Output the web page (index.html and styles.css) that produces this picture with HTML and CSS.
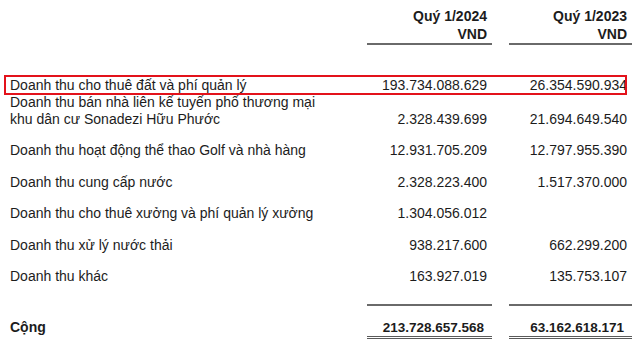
FILE: index.html
```html
<!DOCTYPE html>
<html lang="vi">
<head>
  <meta charset="UTF-8" />
  <meta name="viewport" content="width=device-width, initial-scale=1.0" />
  <title>Doanh thu</title>
  <link rel="stylesheet" href="styles.css">
</head>
<body>

  <div class="report">
    <div class="row head">
      <div></div>
      <div class="num">Quý 1/2024<br>VND</div>
      <div class="num">Quý 1/2023<br>VND</div>
    </div>

    <div class="row item highlight">
      <div class="label">Doanh thu cho thuê đất và phí quản lý</div>
      <div class="num">193.734.088.629</div>
      <div class="num">26.354.590.934</div>
    </div>
    <div class="row item tight">
      <div class="label">Doanh thu bán nhà liên kế tuyến phố thương mại<br>khu dân cư Sonadezi Hữu Phước</div>
      <div class="num">2.328.439.699</div>
      <div class="num">21.694.649.540</div>
    </div>
    <div class="row item">
      <div class="label">Doanh thu hoạt động thể thao Golf và nhà hàng</div>
      <div class="num">12.931.705.209</div>
      <div class="num">12.797.955.390</div>
    </div>
    <div class="row item">
      <div class="label">Doanh thu cung cấp nước</div>
      <div class="num">2.328.223.400</div>
      <div class="num">1.517.370.000</div>
    </div>
    <div class="row item">
      <div class="label">Doanh thu cho thuê xưởng và phí quản lý xưởng</div>
      <div class="num">1.304.056.012</div>
      <div class="num"></div>
    </div>
    <div class="row item">
      <div class="label">Doanh thu xử lý nước thải</div>
      <div class="num">938.217.600</div>
      <div class="num">662.299.200</div>
    </div>
    <div class="row item">
      <div class="label">Doanh thu khác</div>
      <div class="num">163.927.019</div>
      <div class="num">135.753.107</div>
    </div>

    <div class="row rule">
      <div></div>
      <div class="line"></div>
      <div class="line"></div>
    </div>

    <div class="row total">
      <div class="label">Cộng</div>
      <div class="num">213.728.657.568</div>
      <div class="num">63.162.618.171</div>
    </div>
  </div>

</body>
</html>
```

FILE: styles.css
```css
body {
  margin: 0;
  font-family: 'Liberation Sans', Arial, sans-serif;
  background-color: #ffffff;
  color: #1c1c1c;
}

.report {
  padding: 7px 8px 0 10px;
}

.row {
  display: grid;
  grid-template-columns: 1fr 125px 123px;
  column-gap: 17px;
}

.num {
  text-align: right;
  padding-right: 5px;
}

.head {
  font-weight: bold;
  font-size: 14px;
  line-height: 18px;
}

.head .num {
  border-bottom: 2px solid #6a6a6a;
}

.item {
  font-size: 14px;
  line-height: 17px;
  margin-top: 14.5px;
  align-items: end;
}

.highlight {
  position: relative;
  margin-top: 31.5px;
}

.highlight::after {
  content: "";
  position: absolute;
  left: -6px;
  right: 5px;
  top: -2px;
  bottom: -1px;
  border: 2px solid #e3121b;
}

.tight {
  margin-top: 0;
}

.rule {
  margin-top: 19px;
}

.rule .line {
  border-top: 2px solid #6a6a6a;
}

.total {
  margin-top: 13px;
  font-size: 13.5px;
  font-weight: bold;
  line-height: 17px;
}

.total .label {
  font-size: 14px;
}

.total .num {
  padding-right: 8px;
  border-bottom: 3px double #5a5a5a;
}
```
